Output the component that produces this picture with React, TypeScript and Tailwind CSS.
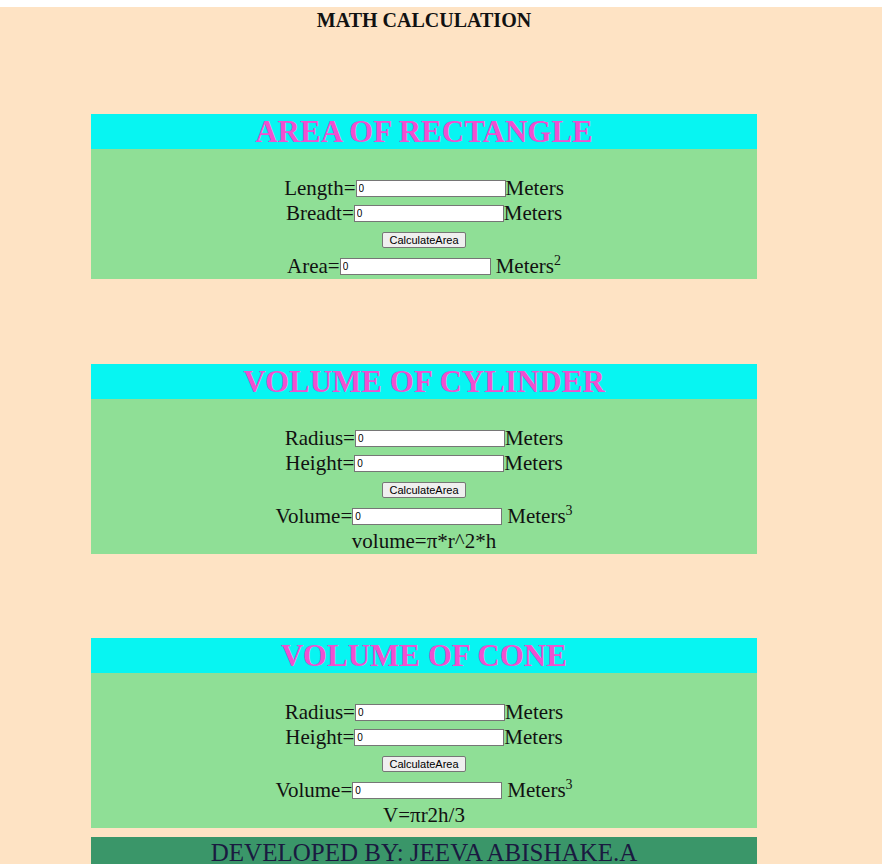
const serif = "font-['Liberation_Serif','Times_New_Roman',serif]";

function NumInput({ w = "w-[150px]" }: { w?: string }) {
  return (
    <input
      type="text"
      defaultValue="0"
      className={`${w} h-[17px] border border-[#767676] bg-white px-[2px] align-middle font-['Liberation_Sans',Arial,sans-serif] text-[10px] text-black outline-none`}
    />
  );
}

function Row({ children }: { children: React.ReactNode }) {
  return <div className="flex h-[25px] items-center justify-center">{children}</div>;
}

function CalcButton() {
  return (
    <div className="flex h-[28px] items-center justify-center">
      <button className="h-[16px] rounded-[2px] border border-[#767676] bg-[#efefef] px-[6px] font-['Liberation_Sans',Arial,sans-serif] text-[11px] leading-none text-black">
        CalculateArea
      </button>
    </div>
  );
}

function Unit({ power }: { power: string }) {
  return (
    <span className="ml-[5px]">
      Meters<sup className="relative -top-[8px] align-baseline text-[14px]">{power}</sup>
    </span>
  );
}

function Section({
  title,
  children,
}: {
  title: string;
  children: React.ReactNode;
}) {
  return (
    <div className="w-[666px]">
      <div className="flex h-[35px] items-center justify-center bg-[#07f5f2]">
        <h2 className="text-[31px] font-bold leading-none text-[#f050d0]">{title}</h2>
      </div>
      <div className="bg-[#8fdf96] pt-[27px] text-[21px] text-[#111]">{children}</div>
    </div>
  );
}

export default function App() {
  return (
    <div className={`min-h-screen bg-white pt-[7px] ${serif}`}>
      <div className="bg-[#fee3c4] pb-[10px]">
        <div className="flex w-[848px] flex-col items-center">
          {/* title */}
          <h1 className="pt-[2px] text-[20px] font-bold leading-[22px] text-[#111]">
            MATH CALCULATION
          </h1>

          <div className="mt-[83px]">
            <Section title="AREA OF RECTANGLE">
              <Row>
                Length=<NumInput />Meters
              </Row>
              <Row>
                Breadt=<NumInput />Meters
              </Row>
              <CalcButton />
              <Row>
                Area=<NumInput w="w-[151px]" />
                <Unit power="2" />
              </Row>
            </Section>
          </div>

          <div className="mt-[85px]">
            <Section title="VOLUME OF CYLINDER">
              <Row>
                Radius=<NumInput />Meters
              </Row>
              <Row>
                Height=<NumInput />Meters
              </Row>
              <CalcButton />
              <Row>
                Volume=<NumInput />
                <Unit power="3" />
              </Row>
              <Row>volume=π*r^2*h</Row>
            </Section>
          </div>

          <div className="mt-[84px]">
            <Section title="VOLUME OF CONE">
              <Row>
                Radius=<NumInput />Meters
              </Row>
              <Row>
                Height=<NumInput />Meters
              </Row>
              <CalcButton />
              <Row>
                Volume=<NumInput />
                <Unit power="3" />
              </Row>
              <Row>V=πr2h/3</Row>
            </Section>
          </div>

          {/* footer */}
          <div className="mt-[9px] flex h-[30px] w-[666px] items-center justify-center bg-[#3a9669]">
            <span className="text-[25px] leading-none text-[#1a1a40]">
              DEVELOPED BY: JEEVA ABISHAKE.A
            </span>
          </div>
        </div>
      </div>
    </div>
  );
}
